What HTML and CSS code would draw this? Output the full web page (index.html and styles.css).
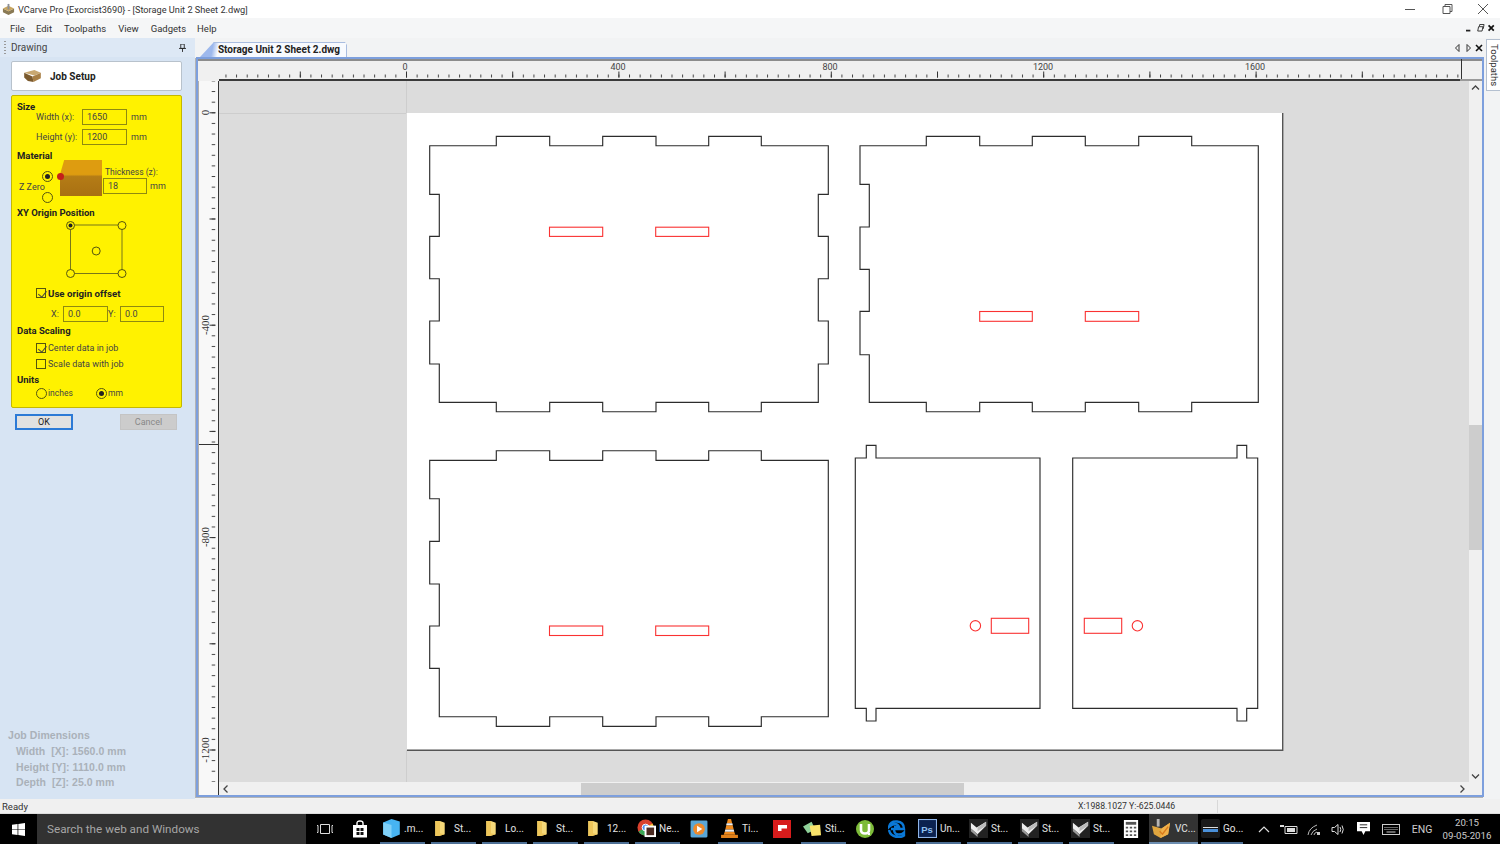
FILE: index.html
```html
<!DOCTYPE html>
<html lang="en">
<head>
<meta charset="utf-8">
<title>VCarve Pro</title>
<link rel="stylesheet" href="styles.css">
</head>
<body>
<svg class="defs" width="0" height="0">
  <symbol id="folder" viewBox="0 0 12 18"><path d="M1 1h5l5 2v12l-6 2H1z" fill="#f6d979"/><path d="M1 1h5v13l5 1-6 2H1z" fill="#eec65a"/></symbol>
  <symbol id="vc" viewBox="0 0 20 20"><rect width="20" height="20" fill="#222"/><path d="M2 4l6 5 10-6v4L9 16 2 10z" fill="#eee"/><path d="M2 10l7 6v3L2 13z" fill="#999"/><path d="M9 9l9-6v4L9 13z" fill="#bbb"/></symbol>
</svg>
<div class="app">
  <header class="titlebar">
    <svg class="title-ic" viewBox="0 0 14 14"><path d="M1 6l6 3 6-3v4l-6 3-6-3z" fill="#8a7a55"/><path d="M1 6l6-3 6 3-6 3z" fill="#c9a65f"/><path d="M6 1h2v6H6z" fill="#8c8f96"/></svg>
    <span class="title-text">VCarve Pro {Exorcist3690} - [Storage Unit 2 Sheet 2.dwg]</span>
    <div class="winctl">
      <svg viewBox="0 0 36 16"><path d="M12 8.500h10" stroke="#555" fill="none"/></svg>
      <svg viewBox="0 0 36 16"><path d="M14 5.500h7v7h-7zM16 5.500v-2h7v7h-2" stroke="#555" fill="none"/></svg>
      <svg viewBox="0 0 36 16"><path d="M13 3l10 10M23 3L13 13" stroke="#555" fill="none"/></svg>
    </div>
  </header>
  <nav class="menubar">
    <span class="m1">File</span><span class="m2">Edit</span><span class="m3">Toolpaths</span><span class="m4">View</span><span class="m5">Gadgets</span><span class="m6">Help</span>
    <div class="mdictl">
      <svg viewBox="0 0 38 12"><path d="M0 9h5" stroke="#222" stroke-width="2"/><path d="M13.500 9.500l1-5h5l-1 5zM15.500 4l.3-2h5l-1 5" stroke="#222" fill="none"/><path d="M26 3l6 6M32 3l-6 6" stroke="#111" stroke-width="2"/></svg>
    </div>
  </nav>
  <main class="main">
    <aside class="side">
      <div class="side-head"><i class="grip"></i><span>Drawing</span>
        <svg class="pin" viewBox="0 0 8 9"><path d="M2 0h4v5H2zM0 5h8M4 5v4" stroke="#222" fill="none"/></svg>
      </div>
      <div class="job-card">
        <svg class="job-ic" viewBox="0 0 18 13"><path d="M0 3l11-3 7 3-7 3z" fill="#c9a871"/><path d="M0 3l9 4 1 6-6-1-4-4z" fill="#7b5a2e"/><path d="M9 7l9-4v6l-8 4z" fill="#a87f45"/></svg>
        <b>Job Setup</b>
      </div>
      <form class="yellow">
        <h4 class="hd hd-size">Size</h4>
        <div class="frow"><label class="lb">Width (x):</label><span class="inp w45">1650</span><span class="unit">mm</span></div>
        <div class="frow r2"><label class="lb">Height (y):</label><span class="inp w45">1200</span><span class="unit">mm</span></div>
        <h4 class="hd hd-mat">Material</h4>
        <div class="mat">
          <div class="zcol">
            <i class="radio on top"></i>
            <span class="zl">Z Zero</span>
            <i class="radio top2"></i>
          </div>
          <div class="block"><i class="ball"></i></div>
          <div class="thick">
            <span class="tl">Thickness (z):</span>
            <div class="tr"><span class="inp w44">18</span><span class="unit u2">mm</span></div>
          </div>
        </div>
        <h4 class="hd hd-xy">XY Origin Position</h4>
        <svg class="origin" viewBox="12 219 170 61">
          <rect x="70.500" y="225" width="51.500" height="48.500" fill="none" stroke="#77771a"/>
          <g fill="#fff200" stroke="#55550f">
            <circle cx="70.500" cy="225.500" r="4"/><circle cx="122" cy="225.500" r="4"/><circle cx="96.200" cy="251" r="4"/><circle cx="70.500" cy="273.500" r="4"/><circle cx="122" cy="273.500" r="4"/>
          </g>
          <circle cx="70.500" cy="225.500" r="2" fill="#222"/>
        </svg>
        <div class="chk c-origin"><i class="box on"></i><b>Use origin offset</b></div>
        <div class="xy"><span class="xl">X:</span><span class="inp w45">0.0</span><span class="yl">Y:</span><span class="inp w44">0.0</span></div>
        <h4 class="hd hd-data">Data Scaling</h4>
        <div class="chk c-center"><i class="box on"></i><span>Center data in job</span></div>
        <div class="chk c-scale"><i class="box"></i><span>Scale data with job</span></div>
        <h4 class="hd hd-units">Units</h4>
        <div class="units"><i class="radio"></i><span class="un un-in">inches</span><i class="radio on"></i><span class="un">mm</span></div>
      </form>
      <div class="btns"><button type="button" class="ok">OK</button><button type="button" class="cancel">Cancel</button></div>
      <div class="dims">
        <div class="dt">Job Dimensions</div>
        <div class="dl">Width&nbsp; [X]: 1560.0 mm</div>
        <div class="dl">Height [Y]: 1110.0 mm</div>
        <div class="dl">Depth&nbsp; [Z]: 25.0 mm</div>
      </div>
    </aside>
    <section class="doc">
      <div class="tabstrip">
        <div class="tab">Storage Unit 2 Sheet 2.dwg</div>
        <svg class="tabctl" viewBox="0 0 30 10"><path d="M4 1.500v7L0.500 5zM12 1.500v7L15.500 5z" fill="none" stroke="#333"/><path d="M21 2l6 6M27 2l-6 6" stroke="#111" stroke-width="1.600"/></svg>
      </div>
      <div class="frame">
        <div class="corner"></div>
        <div class="ruler-top">
          <svg class="rt" viewBox="219 59 1243 21">
            <defs>
              <pattern id="tm" x="406" y="0" width="10.620" height="100" patternUnits="userSpaceOnUse"><rect x="0" y="74.500" width="1" height="3" fill="#444"/></pattern>
              <pattern id="tM" x="406" y="0" width="106.200" height="100" patternUnits="userSpaceOnUse"><rect x="0" y="71.500" width="1" height="6" fill="#333"/></pattern>
            </defs>
            <rect x="219" y="59" width="1243" height="21" fill="url(#tm)"/>
            <rect x="219" y="59" width="1243" height="21" fill="url(#tM)"/>
            <rect x="1461" y="59" width="1" height="21" fill="#333"/>
            <g class="rtx">
              <text x="405" y="70">0</text><text x="618" y="70">400</text><text x="830" y="70">800</text><text x="1043" y="70">1200</text><text x="1255" y="70">1600</text>
            </g>
          </svg>
        </div>
        <div class="ruler-left">
          <svg class="rl" viewBox="198 81 20 701">
            <defs>
              <pattern id="lm" x="198" y="112.300" width="100" height="10.620" patternUnits="userSpaceOnUse"><rect x="13.700" y="0" width="3.500" height="1" fill="#444"/></pattern>
              <pattern id="lM" x="198" y="112.300" width="100" height="106.200" patternUnits="userSpaceOnUse"><rect x="11.500" y="0" width="6" height="1" fill="#333"/></pattern>
            </defs>
            <rect x="198" y="81" width="20" height="701" fill="url(#lm)"/>
            <rect x="198" y="81" width="20" height="701" fill="url(#lM)"/>
            <rect x="199" y="444" width="19" height="1" fill="#333"/>
            <g class="rlx">
              <text transform="translate(208.500 112.500) rotate(-90)">0</text>
              <text transform="translate(208.500 325) rotate(-90)">-400</text>
              <text transform="translate(208.500 537) rotate(-90)">-800</text>
              <text transform="translate(208.500 750) rotate(-90)">-1200</text>
            </g>
          </svg>
        </div>
        <svg class="canvas" viewBox="219 81 1250 701">
          <rect x="219" y="81" width="1250" height="701" fill="#dcdcdc"/>
          <path d="M406.500 81v32M406.500 750v32M219 113.500h187" stroke="#cdcdcd" fill="none"/>
          <rect x="407" y="113" width="876" height="637" fill="#fff"/>
          <path d="M1282.700 113v637.300H407" stroke="#555" stroke-width="1.400" fill="none"/>
          <g class="part">
            <path d="M429.700 145.700H496.300V136.300H549.700V145.700H602.700V136.300H656V145.700H708.700V136.300H761.300V145.700H828.300V194.300H818.300V236.300H828.300V278.700H818.300V321H828.300V364H818.300V402.300H761.300V411.700H708.700V402.300H656V411.700H602.700V402.300H549.700V411.700H496.300V402.300H439.300V364H429.700V321H439.300V278.700H429.700V236.300H439.300V194.300H429.700Z"/>
            <path d="M860 145.700H926.300V136.300H979.700V145.700H1032.300V136.300H1085.300V145.700H1138.700V136.300H1191.700V145.700H1258.300V402.300H1191.700V411.700H1138.700V402.300H1085.300V411.700H1032.300V402.300H979.700V411.700H926.300V402.300H869.300V354.700H860V311.300H869.300V269.300H860V227H869.300V184.300H860Z"/>
            <path d="M429.700 460.300H496.300V450.700H549.700V460.300H602.700V450.700H656V460.300H708.700V450.700H761.300V460.300H828.300V716.700H761.300V726.300H708.700V716.700H656V726.300H602.700V716.700H549.700V726.300H496.300V716.700H439.300V668.300H429.700V626H439.300V584H429.700V541.300H439.300V498.700H429.700Z"/>
            <path d="M855.300 458H866.300V445.300H876V458H1040V708.300H876V721H866.300V708.300H855.300Z"/>
            <path d="M1072.700 458H1237V445.300H1246.700V458H1257.700V708.300H1246.700V721H1237V708.300H1072.700Z"/>
          </g>
          <g class="cut">
            <rect x="549.500" y="227.200" width="53.200" height="9.200"/><rect x="655.700" y="227.200" width="53" height="9.200"/>
            <rect x="979.700" y="311.500" width="52.600" height="9.800"/><rect x="1085.300" y="311.500" width="53.400" height="9.800"/>
            <rect x="549.500" y="626" width="53.200" height="9.500"/><rect x="655.700" y="626" width="53" height="9.500"/>
            <rect x="991.300" y="618.300" width="37.400" height="15"/><rect x="1084.300" y="618.300" width="37.400" height="15"/>
            <circle cx="975.400" cy="625.800" r="5.200"/><circle cx="1137.400" cy="625.800" r="5.200"/>
          </g>
        </svg>
        <div class="vscroll">
          <svg class="vup" viewBox="0 0 8 5"><path d="M.5 4.500L4 1l3.500 3.500" fill="none" stroke="#444" stroke-width="1.300"/></svg>
          <i class="vthumb"></i>
          <svg class="vdn" viewBox="0 0 8 5"><path d="M.5 .5L4 4l3.500-3.500" fill="none" stroke="#444" stroke-width="1.300"/></svg>
        </div>
        <div class="hscroll">
          <svg class="hl" viewBox="0 0 5 8"><path d="M4.500 .5L1 4l3.500 3.500" fill="none" stroke="#444" stroke-width="1.300"/></svg>
          <i class="hthumb"></i>
          <svg class="hr" viewBox="0 0 5 8"><path d="M.5 .5L4 4 .5 7.500" fill="none" stroke="#444" stroke-width="1.300"/></svg>
        </div>
      </div>
    </section>
    <div class="dock"><div class="dock-tab"><span>Toolpaths</span></div></div>
  </main>
  <footer class="status"><span class="st-ready">Ready</span><span class="st-xy">X:1988.1027 Y:-625.0446</span><i class="st-sep"></i></footer>
  <div class="taskbar">
    <div class="start"><svg viewBox="0 0 14 14"><path d="M0 2l6-.9V6.600H0zM6.800 1l7.200-1v6.600H6.800zM0 7.400h6v5.500l-6-.9zM6.800 7.400H14V14l-7.200-1z" fill="#fff"/></svg></div>
    <div class="search">Search the web and Windows</div>
    <div class="ti t-a"><svg viewBox="0 0 16 12"><path d="M3.500 1.500h9v9h-9zM1 2.500h-1M1 9.500h-1M1 2.500v7M15 2.500v7M15 2.500h1M15 9.500h1" fill="none" stroke="#ddd"/></svg></div>
    <div class="ti t-b"><svg viewBox="0 0 16 18"><path d="M1 5h14v12.500H1z" fill="#fff"/><path d="M5 5V3q0-2 3-2t3 2v2" fill="none" stroke="#fff" stroke-width="1.400"/><path d="M4.500 8h3v3h-3zM8.500 8h3v3h-3zM4.500 12h3v3h-3zM8.500 12h3v3h-3z" fill="#111"/></svg></div>
    <div class="tb"><svg viewBox="0 0 14 16"><path d="M0 3l7-3 7 2v11l-7 3-7-3z" fill="#47b4f2"/><path d="M0 3l7 2v11l-7-3z" fill="#7fd0f8"/></svg><span>.m...</span></div>
    <div class="tb fd"><svg viewBox="0 0 12 18"><use href="#folder"/></svg><span>St...</span></div>
    <div class="tb fd"><svg viewBox="0 0 12 18"><use href="#folder"/></svg><span>Lo...</span></div>
    <div class="tb fd"><svg viewBox="0 0 12 18"><use href="#folder"/></svg><span>St...</span></div>
    <div class="tb fd"><svg viewBox="0 0 12 18"><use href="#folder"/></svg><span>12...</span></div>
    <div class="tb"><svg viewBox="0 0 20 20"><circle cx="9" cy="9" r="8.500" fill="#d9412e"/><path d="M9 9L1.600 13.200A8.500 8.500 0 0 0 9 17.500z" fill="#3aa757"/><path d="M9 9l7.400-4.200A8.500 8.500 0 0 1 9 17.500z" fill="#f3c12d"/><circle cx="9" cy="9" r="3.600" fill="#4a8cf0" stroke="#fff"/><rect x="8" y="7" width="12" height="12" fill="#fff"/><rect x="10" y="9" width="8" height="8" fill="#4a2a22"/></svg><span>Ne...</span></div>
    <div class="ti"><svg viewBox="0 0 16 16"><rect x=".5" y=".5" width="15" height="15" rx="1" fill="#5aa6d6"/><circle cx="8" cy="8" r="5.200" fill="#ee8a2c"/><path d="M6.300 5.200l4.600 2.800-4.600 2.800z" fill="#fff"/></svg></div>
    <div class="tb"><svg viewBox="0 0 16 18"><path d="M6.500 0h3l1 4h-5zM5 6h6l1 4H4zM3.500 12h9l1 3H2.500z" fill="#f08a1c"/><path d="M5.300 4h5.400l.5 2H4.800zM4 10h8l.5 2h-9z" fill="#eee"/><path d="M0 15h16v3H0z" fill="#e0801a"/></svg><span>Ti...</span></div>
    <div class="ti"><svg viewBox="0 0 18 18"><rect width="18" height="18" fill="#d71c1c"/><path d="M5 5h9v3.500h-5.500v2.500H5z" fill="#fff"/></svg></div>
    <div class="tb"><svg viewBox="0 0 20 18"><path d="M0 7l9-5 4 8-8 4z" fill="#8fd19a"/><path d="M7 6l11-1 1 11-10 1z" fill="#f8e26a"/></svg><span>Sti...</span></div>
    <div class="ti"><svg viewBox="0 0 18 18"><circle cx="9" cy="9" r="9" fill="#7dbb39"/><path d="M5 4v6q0 3.500 4 3.500t4-3.500V4" fill="none" stroke="#fff" stroke-width="2.600"/><path d="M13 13v2" stroke="#fff" stroke-width="2"/></svg></div>
    <div class="ti"><svg viewBox="0 0 18 18"><path d="M3 9h13q0-7-7-7.500T1 7q3-3 6-3t4 3H6M6 9q0 6 5 5.500 3 0 5-2v3q-3 2-7 1.500-7-1-8-7" fill="none" stroke="#0a78d7" stroke-width="2.400"/></svg></div>
    <div class="tb"><svg viewBox="0 0 18 18"><rect x=".5" y=".5" width="17" height="17" fill="#0b2250" stroke="#8fb4e8"/><text x="3" y="13" class="ps">Ps</text></svg><span>Un...</span></div>
    <div class="tb"><svg viewBox="0 0 20 20"><use href="#vc"/></svg><span>St...</span></div>
    <div class="tb"><svg viewBox="0 0 20 20"><use href="#vc"/></svg><span>St...</span></div>
    <div class="tb"><svg viewBox="0 0 20 20"><use href="#vc"/></svg><span>St...</span></div>
    <div class="ti t-c"><svg viewBox="0 0 15 19"><rect width="15" height="19" fill="#fff"/><path d="M2 2h11v3H2z" fill="#555"/><path d="M2 7h2.500v2H2zM6.200 7h2.500v2H6.200zM10.500 7H13v2h-2.500zM2 11h2.500v2H2zM6.200 11h2.500v2H6.200zM10.500 11H13v2h-2.500zM2 15h2.500v2H2zM6.200 15h2.500v2H6.200zM10.500 15H13v2h-2.500z" fill="#555"/></svg></div>
    <div class="tb tb-active"><svg viewBox="0 0 20 20"><path d="M0 7l10 3 9-6-2 12-8 4-7-4z" fill="#e0a63f"/><path d="M10 10l9-6-2 12-8 4z" fill="#f0b04a"/><path d="M5 0h3v8H5z" fill="#b4b4b4"/><path d="M8 13l3 3 6-8" fill="none" stroke="#d97a1c" stroke-width="1.500"/></svg><span>VC...</span></div>
    <div class="tb tb-go"><svg viewBox="0 0 19 19"><rect width="19" height="19" rx="2" fill="#1a1a1a"/><path d="M2 8h15v1H2z" fill="#ddd"/><path d="M2 10h15v3H2z" fill="#4a90d9"/></svg><span>Go...</span></div>
    <div class="tray">
      <div class="tr-chev"><svg viewBox="0 0 12 7"><path d="M1 6l5-5 5 5" fill="none" stroke="#ddd" stroke-width="1.200"/></svg></div>
      <div class="tr-bat"><svg viewBox="0 0 18 11"><path d="M5 2.500h12v7H5z" fill="none" stroke="#ddd"/><path d="M7 4h8v4H7z" fill="#ddd"/><path d="M0 1h4v2H0z" fill="#ddd"/></svg></div>
      <div class="tr-wifi"><svg viewBox="0 0 14 13"><path d="M1 12Q2 5 10 2M4 12q1-4 6-6M7 12q0-2 3-3" fill="none" stroke="#bbb"/><path d="M10 9h3v3h-3z" fill="#ccc"/></svg></div>
      <div class="tr-vol"><svg viewBox="0 0 14 13"><path d="M1 4.500h2.500L7 1.500v10l-3.500-3H1z" fill="none" stroke="#ddd"/><path d="M9 4q1.500 2.500 0 5M11 2.500q2.500 4 0 8" fill="none" stroke="#ddd"/></svg></div>
      <div class="tr-note"><svg viewBox="0 0 14 15"><path d="M0 0h14v10H9l-2 4-2-4H0z" fill="#fff"/><path d="M3 3h8M3 6h8" stroke="#222"/></svg></div>
      <div class="tr-kb"><svg viewBox="0 0 18 11"><rect x=".5" y=".5" width="17" height="10" fill="none" stroke="#ccc"/><path d="M2.500 3.500h13M2.500 5.500h13" stroke="#ccc" stroke-dasharray="1 1"/><path d="M4.500 8h9" stroke="#ccc"/></svg></div>
      <div class="tr-eng">ENG</div>
      <div class="tr-clock"><span>20:15</span><span>09-05-2016</span></div>
    </div>
  </div>
</div>
</body>
</html>
```
FILE: styles.css
```css
*{box-sizing:border-box}
html,body{margin:0;padding:0;height:100%;overflow:hidden}
body{font-family:Roboto,"Noto Sans",sans-serif;font-size:10px;color:#222;background:#f0f0f0}
.defs{position:absolute}
.app{display:flex;flex-direction:column;width:1500px;height:844px}

.titlebar{height:18px;background:#fff;display:flex;align-items:center;padding-left:2px}
.title-ic{width:13px;height:13px;margin-right:3px}
.title-text{font-size:9.200px;color:#333}
.winctl{margin-left:auto;display:flex;margin-right:-1px}
.winctl svg{width:36px;height:16px;display:block}

.menubar{height:20px;background:#f5f6f7;display:flex;align-items:center;font-size:9.500px;color:#333;position:relative}
.m1{margin-left:10px}.m2{margin-left:11px}.m3{margin-left:12px}.m4{margin-left:12px}.m5{margin-left:12px}.m6{margin-left:11px}
.mdictl{margin-left:auto;margin-right:1px;display:flex}
.mdictl svg{width:33px;height:12px;display:block}

.main{height:761px;display:flex;background:#f2f3f4}
.side{width:195px;flex:none;background:#d7e4f3;display:flex;flex-direction:column}
.side-head{height:19px;display:flex;align-items:center;padding-left:4px;background:#dde8f5;color:#444;font-size:10px}
.grip{width:2px;height:13px;margin-right:5px;background:repeating-linear-gradient(#999 0 1px,transparent 1px 3px)}
.pin{width:7px;height:8px;margin-left:auto;margin-right:9px}
.job-card{margin:4px 0 0 11px;width:171px;height:30px;background:#fff;border:1px solid #b8c2cc;border-radius:2px;display:flex;align-items:center;padding-left:12px;font-size:10px;color:#222}
.job-ic{width:17px;height:12px;margin-right:9px}
.yellow{margin:4px 0 0 11px;width:171px;height:313px;background:#fff200;border:1px solid #c4b800;border-radius:2px;padding-top:5px}
.hd{margin:0 0 0 5px;height:12px;line-height:12px;font-size:9.500px;font-weight:700;color:#222}
.hd-size{margin-bottom:-4px}
.hd-mat{margin-top:5px;margin-bottom:-2px}
.hd-xy{margin-top:2px}
.hd-data{margin-top:3px}
.hd-units{margin-top:4px}
.frow{display:flex;align-items:center;height:16px;padding-left:24px}
.r2{margin-top:4px}
.lb{width:46px;font-size:9px;color:#444}
.inp{display:block;height:16px;line-height:14px;border:1px solid #8f8a10;padding-left:4px;font-size:9px;color:#444}
.w45{width:45px}
.w44{width:44px}
.unit{margin-left:4px;font-size:9px;color:#444}
.mat{display:flex;height:45px}
.zcol{width:48px;display:flex;flex-direction:column;align-items:flex-start}
.radio{display:block;width:11px;height:11px;flex:none;border-radius:50%;border:1px solid #55550f;position:relative}
.radio.on::after{content:"";position:absolute;left:2px;top:2px;width:5px;height:5px;border-radius:50%;background:#222}
.top{margin:11px 0 0 30px}
.top2{margin-left:30px}
.zl{margin-left:7px;height:10px;line-height:10px;font-size:9px;color:#444}
.block{width:42px;height:36px;position:relative}
.block::before{content:"";position:absolute;inset:0;background:linear-gradient(#de9c10 0 40%,#b47c16 46%,#a97012 100%);filter:blur(.7px);clip-path:polygon(10% 0,100% 0,100% 100%,0 100%,0 40%)}
.ball{position:absolute;left:-3px;top:13px;width:7px;height:7px;border-radius:50%;background:#c4201a}
.thick{margin-left:1px;display:flex;flex-direction:column}
.tl{margin:6px 0 0 2px;height:12px;line-height:12px;font-size:8.500px;color:#444}
.tr{display:flex;align-items:center}
.u2{margin-left:3px}
.origin{display:block;width:170px;height:61px}
.chk{display:flex;align-items:center;height:12px;padding-left:24px;font-size:9px;color:#444}
.chk b{color:#222;margin-left:2px;font-size:9.700px}
.chk span{margin-left:2px;font-size:9px}
.box{display:block;width:10px;height:10px;border:1px solid #55550f;position:relative}
.box.on::after{content:"";position:absolute;left:2.500px;top:-.5px;width:3.500px;height:7px;border:solid #444;border-width:0 1.300px 1.300px 0;transform:rotate(40deg)}
.c-origin{margin-top:7px}
.c-center{margin-top:5px}
.c-scale{margin-top:4px}
.xy{display:flex;align-items:center;margin-top:7px;height:16px;padding-left:39px;font-size:9px;color:#444}
.xl{width:12px}
.yl{width:12px}
.units{display:flex;align-items:center;height:12px;margin-top:1px;padding-left:24px;font-size:8.500px;color:#444}
.un{margin-left:1px}
.un-in{width:48px}
.btns{display:flex;margin:6px 0 0 15px}
.btns button{height:16px;padding:0;font:inherit;font-size:9px;border-radius:0}
.ok{width:58px;background:#e1e1e1;border:2px solid #2c7ad6;color:#222}
.cancel{width:57px;margin-left:47px;background:#ccc;border:1px solid #c4c4c4;color:#888}
.dims{margin-top:auto;padding:0 0 8px 8px;color:#aab1b9;font-family:"Liberation Sans",sans-serif;font-size:10.500px;line-height:15.670px;font-weight:700;letter-spacing:.05px}
.dl{padding-left:8px}

.doc{width:1289px;flex:none;display:flex;flex-direction:column}
.tabstrip{height:19px;display:flex;align-items:flex-end;position:relative}
.tab{margin-left:5px;width:147px;height:15px;line-height:15px;padding-left:11px;background:linear-gradient(100deg,#9db8ec 0 9%,#f8fafe 13%);box-shadow:inset 0 1px #a9bde0,inset -1px 0 #a9bde0;clip-path:polygon(0 100%,14px 0,calc(100% - 2px) 0,100% 3px,100% 100%);text-align:center;font-size:10px;font-weight:700;color:#222}
.tabctl{position:absolute;right:-1px;top:5px;width:30px;height:10px}
.frame{margin-left:1px;width:1288px;height:740px;border:2px solid #7d9fdd;background:#f0f0f0;display:grid;grid-template-columns:21px 1250px 13px;grid-template-rows:22px 701px 13px;box-shadow:-1px 1px 0 #b4b4b4}
.corner{background:#f0f0f0;border-top:2px solid #8c8c8c;border-bottom:2px solid #f0f0f0}
.ruler-top{grid-column:2/4;background:#f0f0f0;position:relative}
.ruler-top::before{content:"";position:absolute;left:0;top:0;right:0;height:2px;background:#8c8c8c}
.ruler-top::after{content:"";position:absolute;left:0;top:20px;right:0;height:2px;background:linear-gradient(90deg,#3a3a3a 1241px,#9a9a9a 1241px)}
.rt{display:block;width:1243px;height:21px;position:relative}
.ruler-left{background:#f8f8f8;border-left:1px solid #b0b0b0;border-right:1px solid #333;grid-row:2/4}
.rl{display:block;width:20px;height:701px;margin-left:-1px}
.rtx text{font:9px Roboto,sans-serif;fill:#444;text-anchor:middle}
.rlx text{font:11px "Liberation Serif",serif;fill:#333;text-anchor:middle}
.canvas{display:block;width:1250px;height:701px}
.part{fill:none;stroke:#2c2c2c;stroke-width:1.150}
.cut{fill:none;stroke:#fa3232;stroke-width:1.100}
.vscroll{background:#f0f0f0;position:relative}
.vup{position:absolute;left:2px;top:4px;width:9px;height:5px}
.vdn{position:absolute;left:2px;bottom:3px;width:9px;height:5px}
.vthumb{position:absolute;left:0;top:344px;width:13px;height:125px;background:#cdcdcd}
.hscroll{grid-column:2/4;background:#f0f0f0;position:relative}
.hl{position:absolute;left:4px;top:3px;width:5px;height:8px}
.hr{position:absolute;right:17px;top:3px;width:5px;height:8px}
.hthumb{position:absolute;left:362px;top:1px;width:383px;height:12px;background:#cdcdcd}

.dock{flex:1;padding:1px 0 0 2px;background:#f2f3f4}
.dock-tab{width:14px;height:52px;background:#fff;border:1px solid #b4c0d0;border-right:0;display:flex;align-items:center;justify-content:center}
.dock-tab span{writing-mode:vertical-rl;font-size:9.500px;color:#333;line-height:12px}

.status{height:15px;background:#f0f0f0;display:flex;align-items:center;font-size:9.500px;color:#333;position:relative;border-bottom:1px solid #ddd}
.st-ready{margin-left:2px;width:1076px}
.st-xy{width:139px;font-size:8.700px}
.st-sep{width:1px;height:13px;background:#d8d8d8}

.taskbar{height:30px;background:#000;display:flex;align-items:stretch;color:#ddd}
.start{width:37px;display:flex;align-items:center;justify-content:center}
.start svg{width:13px;height:13px}
.search{width:269px;background:#323232;color:#a6a6a6;font-size:11.700px;line-height:31px;padding-left:10px}
.ti{width:32px;display:flex;align-items:center;justify-content:center}
.ti svg{width:18px;height:18px}
.t-a{margin-left:3px}
.t-a svg{width:16px;height:12px}
.t-b{margin:0 1px 0 3px}
.t-c{margin-left:-2px;margin-right:2px}
.tb{width:45px;margin:0 3px;display:flex;align-items:center;gap:3px;padding-left:2px;font-size:10px;color:#e4e4e4;border-bottom:2px solid #4d6f95}
.tb svg{width:19px;height:19px;flex:none}
.tb.fd{padding-left:3px;gap:8px}
.tb.fd svg{width:12px;height:17px}
.tb-active{width:49px;margin:0;background:#333;padding-left:3px;gap:4px;border-color:#6c8db0}
.tb-go{margin-right:0;width:42px;padding-left:0}
.ps{font:700 9px "Liberation Sans",sans-serif;fill:#8fc0f0}
.tray{margin-left:auto;display:flex;align-items:center;padding-right:5px;font-size:10.500px}
.tray>div{display:flex;align-items:center;justify-content:center}
.tr-chev{width:24px}.tr-chev svg{width:12px;height:7px}
.tr-bat{width:26px}.tr-bat svg{width:18px;height:11px}
.tr-wifi{width:24px}.tr-wifi svg{width:14px;height:13px}
.tr-vol{width:24px}.tr-vol svg{width:14px;height:13px}
.tr-note{width:26px}.tr-note svg{width:13px;height:14px}
.tr-kb{width:29px}.tr-kb svg{width:18px;height:11px}
.tr-eng{width:34px;color:#ccc}
.tray>.tr-clock{width:56px;flex-direction:column;line-height:13px;color:#ccc;font-size:9.700px}
```
